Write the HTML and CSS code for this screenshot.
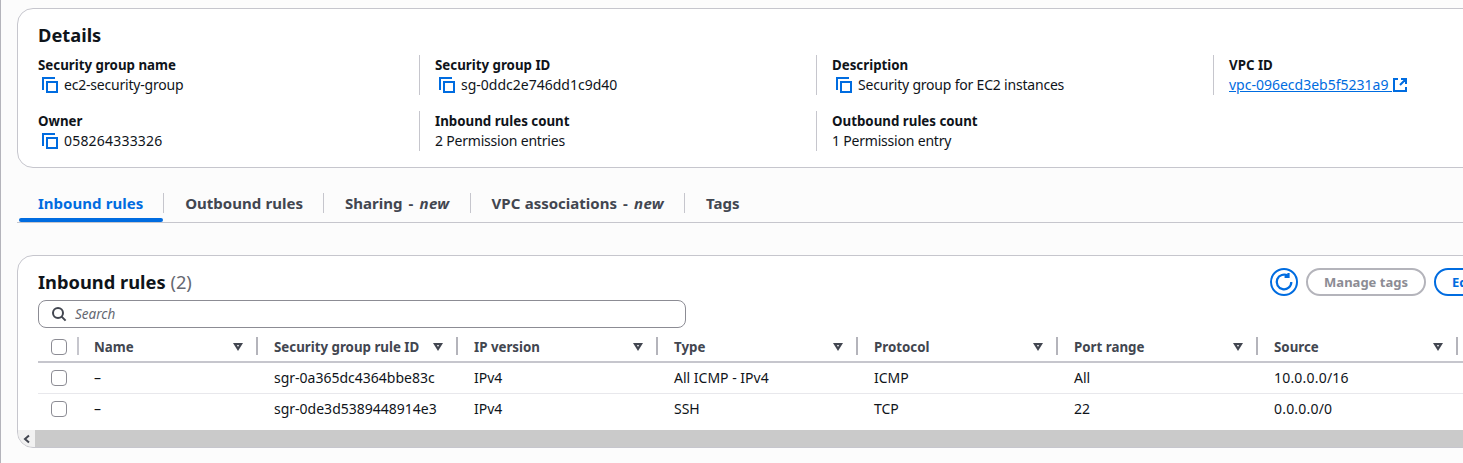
FILE: index.html
```html
<!DOCTYPE html>
<html>
<head>
    <title>Security group details</title>
    <link rel="stylesheet" href="styles.css">
</head>
<body>
    <div class="page">
        <section class="card details">
            <h2 class="details-title">Details</h2>
            <div class="details-grid">
                <div class="field first">
                    <div class="label">Security group name</div>
                    <div class="value copy">
                        <svg class="copy-icon" viewBox="0 0 16 16"><path d="M1 13V1h12M5 5h10v10H5z"/></svg>
                        <span class="tight">ec2-security-group</span>
                    </div>
                </div>
                <div class="field">
                    <div class="label">Security group ID</div>
                    <div class="value copy">
                        <svg class="copy-icon" viewBox="0 0 16 16"><path d="M1 13V1h12M5 5h10v10H5z"/></svg>
                        sg-0ddc2e746dd1c9d40
                    </div>
                </div>
                <div class="field">
                    <div class="label">Description</div>
                    <div class="value copy">
                        <svg class="copy-icon" viewBox="0 0 16 16"><path d="M1 13V1h12M5 5h10v10H5z"/></svg>
                        <span class="tight">Security group for EC2 instances</span>
                    </div>
                </div>
                <div class="field">
                    <div class="label">VPC ID</div>
                    <div class="value">
                        <a class="link" href="#">vpc-096ecd3eb5f5231a9 </a>
                        <svg class="ext-icon" viewBox="0 0 16 16"><path d="M6 2H2v12h12v-4M9 2h5v5M14 2 8 8"/></svg>
                    </div>
                </div>
                <div class="field first">
                    <div class="label">Owner</div>
                    <div class="value copy">
                        <svg class="copy-icon" viewBox="0 0 16 16"><path d="M1 13V1h12M5 5h10v10H5z"/></svg>
                        <span class="wide">058264333326</span>
                    </div>
                </div>
                <div class="field">
                    <div class="label">Inbound rules count</div>
                    <div class="value"><span class="tight">2 Permission entries</span></div>
                </div>
                <div class="field">
                    <div class="label">Outbound rules count</div>
                    <div class="value"><span class="tight">1 Permission entry</span></div>
                </div>
            </div>
        </section>

        <nav class="tabs">
            <div class="tab active">Inbound rules</div>
            <div class="tab">Outbound rules</div>
            <div class="tab">Sharing <span class="dash">-</span> <em>new</em></div>
            <div class="tab">VPC associations <span class="dash">-</span> <em>new</em></div>
            <div class="tab last">Tags</div>
        </nav>

        <section class="card rules">
            <div class="rules-head">
                <h2 class="rules-title">Inbound rules <span class="count">(2)</span></h2>
                <button class="refresh">
                    <svg viewBox="0 0 16 16"><path d="M14.5 8A6.5 6.5 0 1 1 11.5 2.5M12 0v3.5H8.5"/></svg>
                </button>
                <button class="btn disabled">Manage tags</button>
                <button class="btn">Edit inbound rules</button>
            </div>
            <div class="search">
                <svg class="search-icon" viewBox="0 0 16 16"><circle cx="7" cy="7" r="5"/><path d="m10.6 10.6 4 4"/></svg>
                <span class="placeholder">Search</span>
            </div>

            <div class="row head">
                <div class="check-cell"><span class="checkbox"></span></div>
                <div class="col name">Name<i class="sort"></i></div>
                <div class="col">Security group rule ID<i class="sort"></i></div>
                <div class="col">IP version<i class="sort"></i></div>
                <div class="col">Type<i class="sort"></i></div>
                <div class="col">Protocol<i class="sort"></i></div>
                <div class="col">Port range<i class="sort"></i></div>
                <div class="col">Source<i class="sort"></i></div>
            </div>
            <div class="row">
                <div class="check-cell"><span class="checkbox"></span></div>
                <div class="col name">–</div>
                <div class="col">sgr-0a365dc4364bbe83c</div>
                <div class="col">IPv4</div>
                <div class="col">All ICMP - IPv4</div>
                <div class="col">ICMP</div>
                <div class="col">All</div>
                <div class="col wide">10.0.0.0/16</div>
            </div>
            <div class="row last-row">
                <div class="check-cell"><span class="checkbox"></span></div>
                <div class="col name">–</div>
                <div class="col">sgr-0de3d5389448914e3</div>
                <div class="col">IPv4</div>
                <div class="col">SSH</div>
                <div class="col">TCP</div>
                <div class="col">22</div>
                <div class="col wide">0.0.0.0/0</div>
            </div>

            <div class="scrollbar">
                <div class="scroll-left">
                    <svg viewBox="0 0 10 10"><path d="M7 1.5 3 5l4 3.5"/></svg>
                </div>
            </div>
        </section>
    </div>
</body>
</html>
```

FILE: styles.css
```css
html, body {
    margin: 0;
    padding: 0;
    height: 463px;
    overflow: hidden;
}

body {
    font-family: "Noto Sans", "Open Sans", sans-serif;
    font-size: 14px;
    color: #0f141a;
    background-color: #fcfcfc;
}

.page {
    width: 1700px;
    height: 463px;
    box-sizing: border-box;
    padding: 8px 0 0 17px;
    border-left: 1px solid #b4b4bb;
}

.tight {
    letter-spacing: -0.2px;
}

.wide {
    letter-spacing: 0.2px;
}

.card {
    background-color: #fff;
    border: 1px solid #c6c6cd;
    border-radius: 16px;
    overflow: hidden;
}

.details {
    height: 160px;
    box-sizing: border-box;
    padding: 14px 19px 0 20px;
    margin-left: -1px;
}

.details-title {
    margin: 0;
    font-size: 18.3px;
    line-height: 24px;
    font-weight: 700;
}

.details-grid {
    display: grid;
    grid-template-columns: 381px repeat(3, 397px);
    grid-auto-rows: 40px;
    row-gap: 16px;
    margin-top: 8px;
}

.field {
    border-left: 1px solid #c6c6cd;
    padding-left: 15px;
}

.field.first {
    border-left: none;
    padding-left: 0;
}

.label {
    font-size: 13.3px;
    font-weight: 700;
    line-height: 20px;
}

.value {
    line-height: 20px;
    display: flex;
    align-items: center;
}

.copy-icon {
    width: 16px;
    height: 16px;
    margin: 0 6px 0 4px;
    fill: none;
    stroke: #006ce0;
    stroke-width: 2;
}

.link {
    color: #006ce0;
    text-decoration: underline;
    white-space: pre;
}

.ext-icon {
    width: 16px;
    height: 16px;
    fill: none;
    stroke: #006ce0;
    stroke-width: 2;
}

.tabs {
    display: flex;
    height: 39px;
    margin: 15px 0 0 -1px;
    border-bottom: 1px solid #c6c6cd;
}

.tab {
    height: 20px;
    margin-top: 10px;
    padding: 0 20px 0 21px;
    border-right: 1px solid #c6c6cd;
    font-size: 15px;
    line-height: 20px;
    font-weight: 700;
    color: #424650;
    white-space: nowrap;
    word-spacing: 0.5px;
}

.tab em {
    font-style: italic;
    letter-spacing: 0.4px;
}

.dash {
    margin: 0 1.7px;
}

.tab.last {
    border-right: none;
}

.tab.active {
    color: #006ce0;
    position: relative;
    margin-left: 2px;
    padding-left: 19px;
}

.tab.active::after {
    content: "";
    position: absolute;
    left: 0;
    right: 0;
    top: 25px;
    height: 4px;
    border-radius: 2px;
    background-color: #006ce0;
}

.rules {
    height: 193px;
    box-sizing: border-box;
    margin: 32px 0 0 -1px;
    padding-left: 20px;
    position: relative;
}

.rules-head {
    display: flex;
    align-items: center;
    height: 28px;
    margin-top: 12px;
}

.rules-title {
    margin: 0;
    width: 1232px;
    font-size: 18.3px;
    line-height: 28px;
    font-weight: 700;
}

.count {
    font-weight: 400;
    color: #656871;
}

.refresh {
    width: 28px;
    height: 28px;
    padding: 0;
    border: 2px solid #006ce0;
    border-radius: 50%;
    background-color: #fff;
    display: flex;
    align-items: center;
    justify-content: center;
}

.refresh svg {
    width: 18px;
    height: 18px;
    fill: none;
    stroke: #006ce0;
    stroke-width: 2;
    overflow: visible;
}

.btn {
    height: 28px;
    margin-left: 8px;
    padding: 0 16px;
    border: 2px solid #006ce0;
    border-radius: 14px;
    background-color: #fff;
    font-family: inherit;
    font-size: 13px;
    line-height: 20px;
    font-weight: 700;
    color: #006ce0;
    white-space: nowrap;
}

.btn.disabled {
    width: 120px;
    border-color: #b4b4bb;
    color: #8c8c94;
}

.search {
    width: 648px;
    height: 28px;
    box-sizing: border-box;
    margin-top: 4px;
    padding-left: 12px;
    border: 1px solid #8c8c94;
    border-radius: 8px;
    display: flex;
    align-items: center;
}

.search-icon {
    width: 16px;
    height: 16px;
    fill: none;
    stroke: #424650;
    stroke-width: 2;
}

.placeholder {
    margin-left: 8px;
    font-size: 13.5px;
    font-style: italic;
    color: #656871;
}

.row {
    display: grid;
    grid-template-columns: 39px 181px repeat(6, 200px);
    align-items: center;
    height: 30px;
    border-bottom: 1px solid #e8e8ec;
}

.row.head {
    height: 28px;
    margin-top: 5px;
    border-bottom: 2px solid #c6c6cd;
    font-size: 13.3px;
    font-weight: 700;
    color: #424650;
}

.row.last-row {
    height: 36px;
    border-bottom: none;
}

.row.last-row .col,
.row.last-row .check-cell {
    margin-bottom: 6px;
}

.check-cell {
    padding-left: 13px;
    height: 16px;
}

.checkbox {
    display: block;
    width: 14px;
    height: 14px;
    border: 1px solid #8c8c94;
    border-radius: 4px;
    background-color: #fff;
}

.col {
    position: relative;
    padding-left: 16px;
    line-height: 20px;
    white-space: nowrap;
}

.col.name {
    padding-left: 17px;
}

.head .col {
    display: flex;
    align-items: center;
}

.head .col::after {
    content: "";
    position: absolute;
    right: 0;
    top: 0;
    width: 2px;
    height: 18px;
    background-color: #b4b4bb;
}

.head .name::before {
    content: "";
    position: absolute;
    left: 0;
    top: 0;
    width: 2px;
    height: 18px;
    background-color: #c6c6cd;
}

.sort {
    position: absolute;
    right: 15px;
    top: 6px;
    width: 0;
    height: 0;
    border-left: 5px solid transparent;
    border-right: 5px solid transparent;
    border-top: 8px solid #424650;
}

.sort::after {
    content: "";
    position: absolute;
    left: -1.5px;
    top: -6px;
    width: 0;
    height: 0;
    border-left: 1.5px solid transparent;
    border-right: 1.5px solid transparent;
    border-top: 2.5px solid #fff;
}

.scrollbar {
    position: absolute;
    left: 0;
    right: 0;
    bottom: 0;
    height: 17px;
    background-color: #cacaca;
}

.scroll-left {
    width: 17px;
    height: 17px;
    background-color: #f1f1f1;
    display: flex;
    align-items: center;
    justify-content: center;
}

.scroll-left svg {
    width: 10px;
    height: 10px;
    fill: none;
    stroke: #424650;
    stroke-width: 2;
}
```
